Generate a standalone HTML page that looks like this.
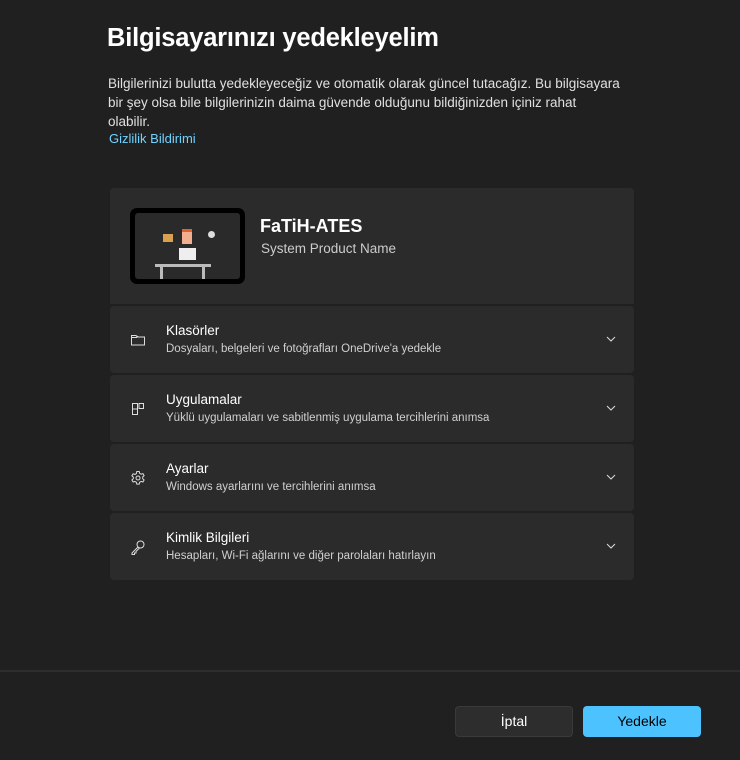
<!DOCTYPE html><html><head><style>
body{margin:0;width:740px;height:760px;background:#202020;font-family:"Segoe UI","Liberation Sans",sans-serif;color:#fff;position:relative;overflow:hidden}
h1{position:absolute;left:107px;top:24px;margin:0;font-size:25.5px;font-weight:600;letter-spacing:-0.2px}
.p{position:absolute;left:108px;top:74px;width:528px;font-size:13.5px;line-height:19px;color:#e0e0e0}
.link{position:absolute;left:109px;top:131px;font-size:13px;color:#6fd3ff}
.card{position:absolute;left:110px;width:524px;background:#2b2b2b;border-radius:4px}
.row .ic{position:absolute;left:20px;top:26px;width:16px;height:16px}
.row .t{position:absolute;left:56px;top:17px;font-size:13.5px}
.row .s{position:absolute;left:56px;top:37px;font-size:11.5px;color:#d0d0d0}
.row .ch{position:absolute;right:18px;top:29px}
.btn{position:absolute;top:706px;width:116px;height:30px;border-radius:4px;font-size:14px;text-align:center;line-height:30px}
</style></head><body>
<h1>Bilgisayarınızı yedekleyelim</h1>
<div class="p">Bilgilerinizi bulutta yedekleyeceğiz ve otomatik olarak güncel tutacağız. Bu bilgisayara<br>bir şey olsa bile bilgilerinizin daima güvende olduğunu bildiğinizden içiniz rahat<br>olabilir.</div>
<div class="link">Gizlilik Bildirimi</div>
<div class="card" style="top:188px;height:116px;border-radius:4px 4px 0 0">
<div style="position:absolute;left:20px;top:20px;width:115px;height:76px;background:#000;border-radius:7px">
<div style="position:absolute;left:5px;top:5px;width:105px;height:66px;background:#2a2a2a;border-radius:3px">
<div style="position:absolute;left:20px;top:51px;width:56px;height:3px;background:#bbb"></div>
<div style="position:absolute;left:25px;top:54px;width:3px;height:12px;background:#bbb"></div>
<div style="position:absolute;left:67px;top:54px;width:3px;height:12px;background:#bbb"></div>
<div style="position:absolute;left:44px;top:35px;width:17px;height:12px;background:#eee"></div>
<div style="position:absolute;left:47px;top:16px;width:10px;height:12px;background:#f0b090;border-top:3px solid #e06030"></div>
<div style="position:absolute;left:73px;top:18px;width:7px;height:7px;background:#ddd;border-radius:50%"></div>
<div style="position:absolute;left:28px;top:21px;width:10px;height:8px;background:#d9a050"></div>
</div></div>
<div style="position:absolute;left:150px;top:28px;font-size:18px;font-weight:600">FaTiH-ATES</div>
<div style="position:absolute;left:151px;top:53px;font-size:13.5px;color:#ccc">System Product Name</div>
</div>
<div class="card row" style="top:306px;height:67px">
<svg class="ic" viewBox="0 0 16 16" fill="none" stroke="#ddd" stroke-width="1"><path d="M1.5 3.5h4.5l1.5 1.5h7v8h-13z M1.5 5.5h5l1.5-1.5"/></svg>
<div class="t">Klasörler</div><div class="s">Dosyaları, belgeleri ve fotoğrafları OneDrive'a yedekle</div>
<svg class="ch" width="10" height="8" viewBox="0 0 10 8"><path d="M1 2l4 4 4-4" stroke="#ddd" fill="none"/></svg></div>
<div class="card row" style="top:375px;height:67px">
<svg class="ic" viewBox="0 0 16 16" fill="none" stroke="#ddd" stroke-width="1"><path d="M2.5 2.5h5v11h-5z M2.5 8h5 M9 2.5h4.5v5h-4.5z"/></svg>
<div class="t">Uygulamalar</div><div class="s">Yüklü uygulamaları ve sabitlenmiş uygulama tercihlerini anımsa</div>
<svg class="ch" width="10" height="8" viewBox="0 0 10 8"><path d="M1 2l4 4 4-4" stroke="#ddd" fill="none"/></svg></div>
<div class="card row" style="top:444px;height:67px">
<svg class="ic" viewBox="0 0 16 16" fill="none" stroke="#ddd" stroke-width="1"><circle cx="8" cy="8" r="2"/><path d="M6.8 1.5h2.4l.4 1.8 1.5.9 1.8-.6 1.2 2-1.4 1.3v1.8l1.4 1.3-1.2 2-1.8-.6-1.5.9-.4 1.8H6.8l-.4-1.8-1.5-.9-1.8.6-1.2-2 1.4-1.3V7.1L1.9 5.8l1.2-2 1.8.6 1.5-.9z"/></svg>
<div class="t">Ayarlar</div><div class="s">Windows ayarlarını ve tercihlerini anımsa</div>
<svg class="ch" width="10" height="8" viewBox="0 0 10 8"><path d="M1 2l4 4 4-4" stroke="#ddd" fill="none"/></svg></div>
<div class="card row" style="top:513px;height:67px">
<svg class="ic" viewBox="0 0 16 16" fill="none" stroke="#ddd" stroke-width="1"><circle cx="10.5" cy="5.5" r="3.5"/><path d="M8 8l-6 6v1.5h2.5v-1.5h1.5v-1.5l3.5-3.5"/></svg>
<div class="t">Kimlik Bilgileri</div><div class="s">Hesapları, Wi-Fi ağlarını ve diğer parolaları hatırlayın</div>
<svg class="ch" width="10" height="8" viewBox="0 0 10 8"><path d="M1 2l4 4 4-4" stroke="#ddd" fill="none"/></svg></div>
<div style="position:absolute;left:0;top:670px;width:740px;height:2px;background:#2e2e2e"></div>
<div class="btn" style="left:455px;background:#2d2d2d;border:1px solid #3a3a3a;width:116px;height:29px;line-height:29px">İptal</div>
<div class="btn" style="left:583px;background:#4cc2ff;color:#000;width:118px;height:31px;line-height:31px">Yedekle</div>
</body></html>
